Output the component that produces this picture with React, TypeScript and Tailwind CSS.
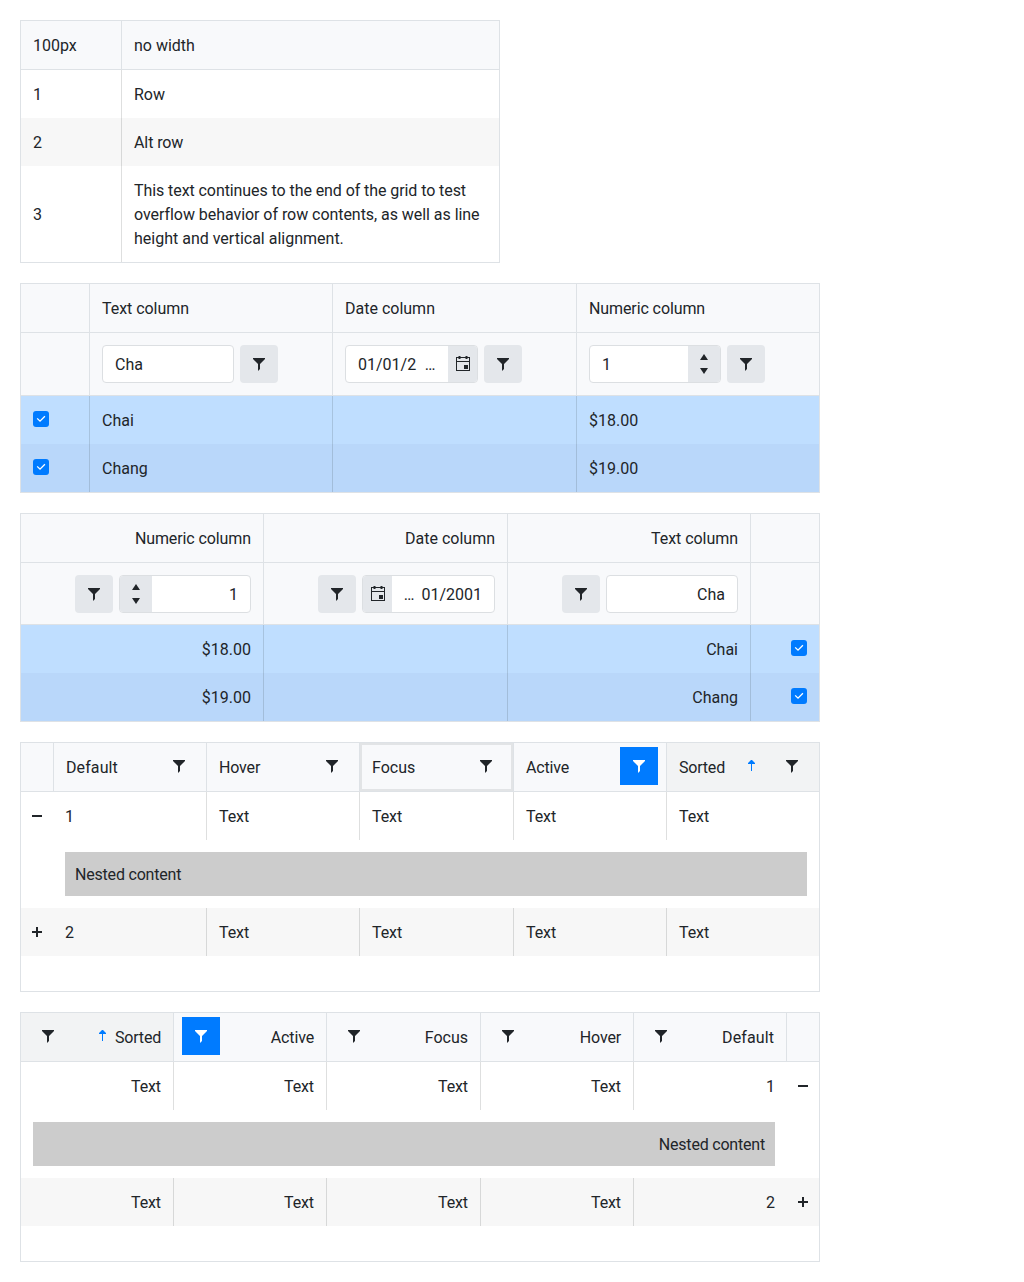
import React from "react";
import clsx from "clsx";

function Icon({ d, className }: { d: string; className?: string }) {
  return (
    <svg viewBox="0 0 16 16" className={clsx("size-4 shrink-0 fill-current", className)} aria-hidden="true">
      <path fillRule="evenodd" d={d} />
    </svg>
  );
}

const FILTER = "M2 2v1l5 5v7l2-2V8l5-5V2z";
const SORT = "M8 13V6H5V5L8 2H9L12 5V6H9v7z";
const CALENDAR = "M1 1h2.5V0h2v1h5V0h2v1H15v14H1V1zm1 1v3h12V2h-1.5v1h-2V2h-5v1h-2V2zm0 4v8h12V6zM9 9h4v4H9z";
const MINUS = "M3 7h10v2H3z";
const PLUS = "M7 3h2v4h4v2H9v4H7V9H3V7h4z";

function FilterButton({ variant = "solid" }: { variant?: "solid" | "flat" | "active" }) {
  return (
    <button
      aria-label="Filter"
      className={clsx(
        "flex size-[38px] shrink-0 items-center justify-center",
        variant === "solid" && "rounded bg-[#e4e7eb]",
        variant === "active" && "bg-[#007bff] text-white",
      )}
    >
      <Icon d={FILTER} />
    </button>
  );
}

function Checkbox() {
  return (
    <span className="mt-[15px] block size-4 rounded-[3px] bg-[#007bff]">
      <svg viewBox="0 0 16 16" className="size-4 fill-none stroke-white" strokeWidth="1.3" aria-hidden="true">
        <path d="M4.2 7.4l2.8 2.8 4.9-5" />
      </svg>
    </span>
  );
}

function Field({ width, children }: { width: string; children: React.ReactNode }) {
  return (
    <div className={clsx("flex h-[38px] overflow-hidden rounded border border-[#dcdfe2] bg-white", width)}>{children}</div>
  );
}

function FilterCell({ children }: { children?: React.ReactNode }) {
  return <div className="flex gap-1.5 border-s border-[#dee2e6] ps-3 pt-3">{children}</div>;
}

function Panel({ className, rtl, children }: { className: string; rtl?: boolean; children: React.ReactNode }) {
  return (
    <section dir={rtl ? "rtl" : "ltr"} className={clsx("border border-[#dee2e6]", className)}>
      {children}
    </section>
  );
}

function WidthGrid() {
  const rows = [
    { id: "1", text: "Row" },
    { id: "2", text: <span className="tracking-[-0.1px]">Alt row</span> },
    {
      id: "3",
      text: (
        <>
          <span className="tracking-[-0.08px]">This text continues to the end of the grid to test </span>
          <span className="tracking-[-0.05px]">overflow behavior of row contents, as well as line </span>
          height and vertical alignment.
        </>
      ),
    },
  ];
  return (
    <Panel className="w-[480px]">
      <div className="grid grid-cols-[100px_1fr] border-b border-[#dee2e6] bg-[#f8f9fb]">
        <div className="px-3 pt-[13px] pb-[11px]">100px</div>
        <div className="border-s border-[#dee2e6] px-3 pt-[13px] pb-[11px]">no width</div>
      </div>
      {rows.map(({ id, text }, i) => (
        <div key={id} className={clsx("grid grid-cols-[100px_1fr]", i === 1 && "bg-[#f7f7f7]")}>
          <div className="flex items-center px-3 pt-[13px] pb-[11px]">{id}</div>
          <div className="border-s border-[#212529]/15 px-3 pt-[13px] pb-[11px] [font-variant-ligatures:common-ligatures]">{text}</div>
        </div>
      ))}
    </Panel>
  );
}

function FilterGrid({ rtl }: { rtl?: boolean }) {
  const cols = "grid grid-cols-[68px_243px_244px_243px]";
  return (
    <Panel rtl={rtl} className="w-[800px]">
      <div className={clsx(cols, "h-[49px] border-b border-[#dee2e6] bg-[#f8f9fb]")}>
        <div />
        {["Text column", "Date column", "Numeric column"].map((t) => (
          <div
            key={t}
            className={clsx(
              "border-s border-[#dee2e6] px-3 pt-[13px]",
              t === "Numeric column" && "tracking-[-0.1px]",
              t === "Text column" && "tracking-[-0.05px]",
            )}
          >
            {t}
          </div>
        ))}
      </div>
      <div className={clsx(cols, "border-b border-[#dee2e6] bg-[#f8f9fb]", rtl ? "h-[62px]" : "h-[63px]")}>
        <div />
        <FilterCell>
          <Field width="w-[132px]">
            <span className="px-3 pt-[7px]">Cha</span>
          </Field>
          <FilterButton />
        </FilterCell>
        <FilterCell>
          <Field width="w-[133px]">
            <span className={clsx("flex flex-1 ps-3 pt-[7px] whitespace-nowrap", rtl ? "gap-[7px]" : "gap-[8.5px]")}>
              <span>{rtl ? "01/2001" : "01/01/2"}</span>
              <span>…</span>
            </span>
            <span className="flex w-[29px] items-center justify-center bg-[#e4e7eb]">
              <Icon d={CALENDAR} />
            </span>
          </Field>
          <FilterButton />
        </FilterCell>
        <FilterCell>
          <Field width="w-[132px]">
            <span className="flex-1 px-3 pt-[7px]">1</span>
            <span className="flex w-8 flex-col items-center justify-center gap-2 bg-[#e4e7eb]">
              <svg viewBox="0 0 8 6" className="h-1.5 w-2 fill-current"><path d="M4 0l4 6H0z" /></svg>
              <svg viewBox="0 0 8 6" className="h-1.5 w-2 fill-current"><path d="M0 0h8L4 6z" /></svg>
            </span>
          </Field>
          <FilterButton />
        </FilterCell>
      </div>
      {[["Chai", "$18.00"], ["Chang", "$19.00"]].map(([name, price], i) => (
        <div key={name} className={clsx(cols, "h-12", i ? "bg-[#b9d7fa]" : "bg-[#bfdeff]")}>
          <div className="px-3"><Checkbox /></div>
          <div className="border-s border-[#212529]/15 px-3 pt-[13px]">{name}</div>
          <div className="border-s border-[#212529]/15" />
          <div className="border-s border-[#212529]/15 px-3 pt-[13px]">{price}</div>
        </div>
      ))}
    </Panel>
  );
}

const STATE_COLS = "grid grid-cols-[32px_153px_153px_154px_153px_153px]";

function DataRow({ id, open }: { id: string; open?: boolean }) {
  return (
    <div className={clsx(STATE_COLS, "h-12", !open && "bg-[#f7f7f7]")}>
      <div className="flex items-center justify-center">
        <Icon d={open ? MINUS : PLUS} />
      </div>
      <div className="px-3 pt-[13px]">{id}</div>
      {[0, 1, 2, 3].map((n) => (
        <div key={n} className="border-s border-[#212529]/15 px-3 pt-[13px] tracking-[-0.1px]">Text</div>
      ))}
    </div>
  );
}

function StateGrid({ rtl }: { rtl?: boolean }) {
  return (
    <Panel rtl={rtl} className="h-[250px] w-[800px]">
      <div className={clsx(STATE_COLS, "h-[49px] border-b border-[#dee2e6] bg-[#f8f9fb]")}>
        <div />
        {["Default", "Hover", "Focus", "Active", "Sorted"].map((t) => (
          <div
            key={t}
            className={clsx(
              "flex border-s border-[#dee2e6] ps-3 pe-2 pt-1",
              t === "Focus" && !rtl && "shadow-[inset_0_0_0_2px_#e2e4e6]",
              t === "Sorted" && "bg-[#f2f3f4]",
            )}
          >
            <span
              className={clsx(
                "pt-[9px]",
                t === "Sorted" && "w-[46px] tracking-[-0.2px]",
                t === "Default" && "tracking-[0.1px]",
                (t === "Hover" || t === "Active") && "tracking-[-0.15px]",
              )}
            >
              {t}
            </span>
            {t === "Sorted" && <Icon d={SORT} className={clsx("mt-[11px] text-[#007bff]", rtl ? "ms-[5px]" : "ms-[18px]")} />}
            <span className="ms-auto">
              <FilterButton variant={t === "Active" ? "active" : "flat"} />
            </span>
          </div>
        ))}
      </div>
      <DataRow id="1" open />
      <div className="py-3 ps-11 pe-3">
        <div className="bg-[#cccccc] px-2.5 pt-[11px] pb-[9px] tracking-[-0.2px]">Nested content</div>
      </div>
      <DataRow id="2" />
    </Panel>
  );
}

export default function App() {
  return (
    <main className="flex h-[1282px] flex-col gap-5 bg-white p-5 font-['Roboto',sans-serif] text-base text-[#212529]">
      <WidthGrid />
      <FilterGrid />
      <FilterGrid rtl />
      <StateGrid />
      <StateGrid rtl />
    </main>
  );
}
